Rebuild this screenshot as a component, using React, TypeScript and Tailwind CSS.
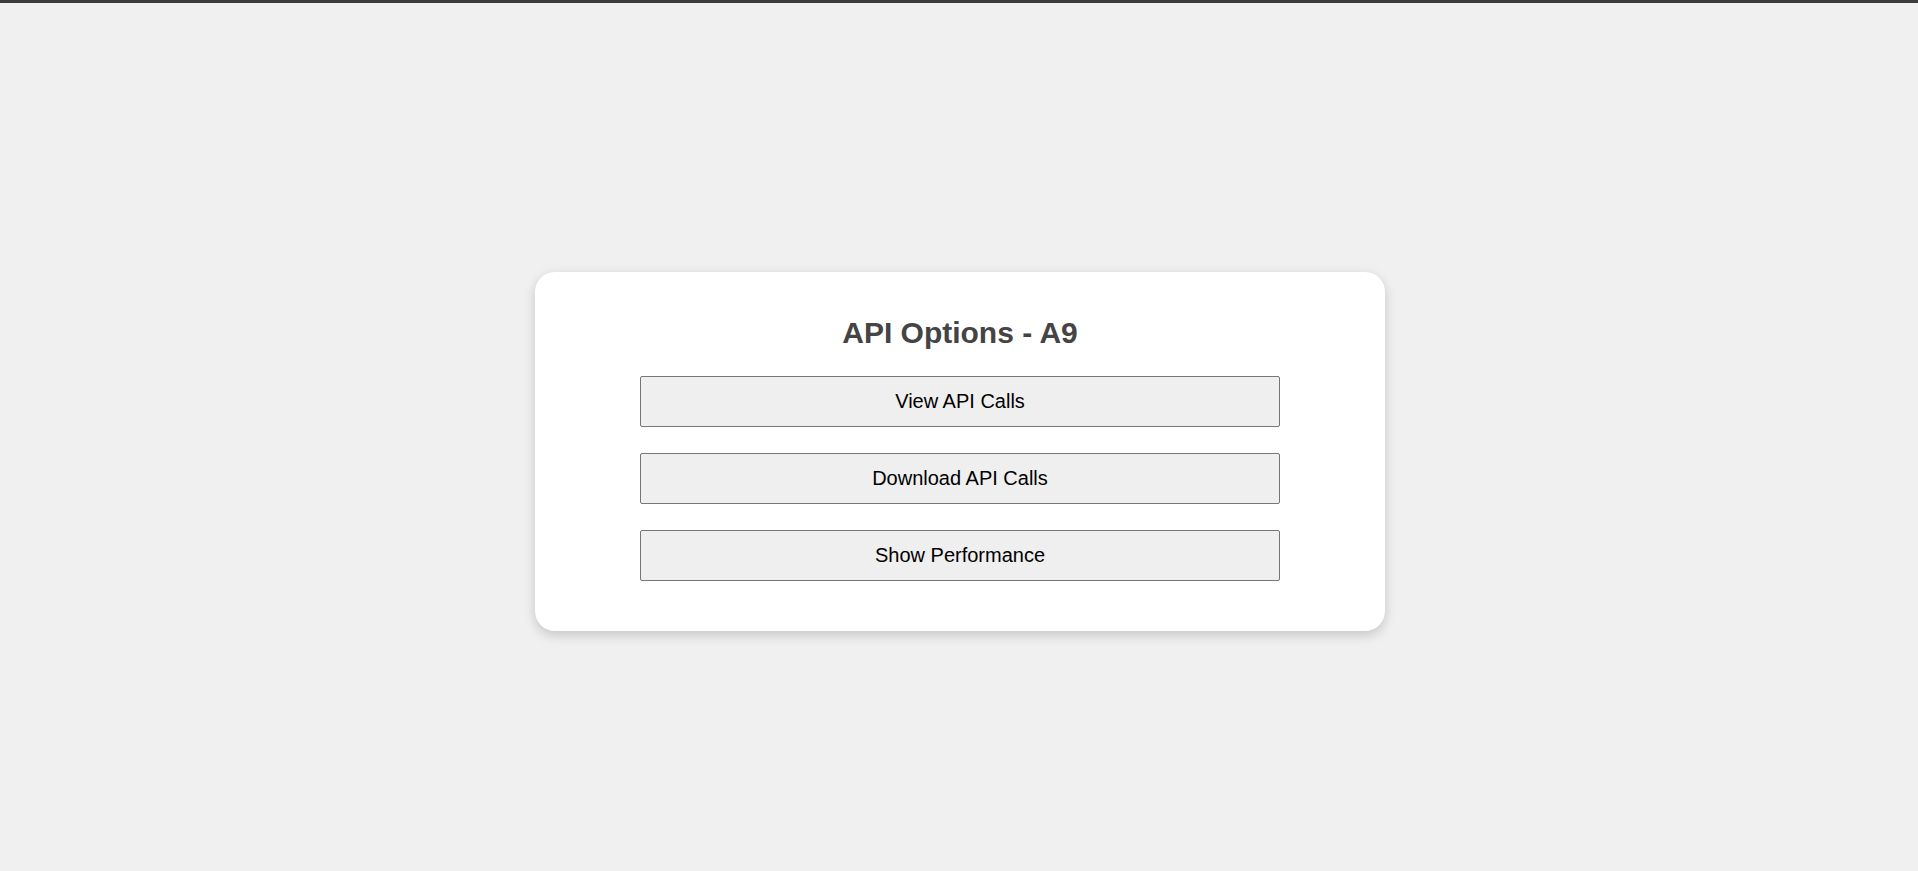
import React from "react";

export default function App() {
  const buttons = ["View API Calls", "Download API Calls", "Show Performance"];
  return (
    <div
      className="w-full h-[871px] bg-[#f0f0f0] flex flex-col overflow-hidden"
      style={{ fontFamily: '"Liberation Sans", Arial, sans-serif' }}
    >
      <div className="h-[3px] w-full bg-[#3c3c3c] shrink-0" />
      <div className="flex justify-center pt-[269px] pl-[2px]">
        <div className="w-[850px] bg-white rounded-[20px] shadow-[0_4px_12px_rgba(0,0,0,0.18)] flex flex-col items-center pt-[44px] pb-[50px]">
          <h2 className="text-[30px] leading-[34px] font-bold text-[#444444] m-0">
            API Options - A9
          </h2>
          <div className="mt-[26px] flex flex-col gap-[26px]">
            {buttons.map((b) => (
              <button
                key={b}
                className="w-[640px] h-[51px] bg-[#efefef] border border-[#767676] rounded-[2px] text-[20px] leading-[23px] text-black flex items-center justify-center"
              >
                {b}
              </button>
            ))}
          </div>
        </div>
      </div>
    </div>
  );
}
